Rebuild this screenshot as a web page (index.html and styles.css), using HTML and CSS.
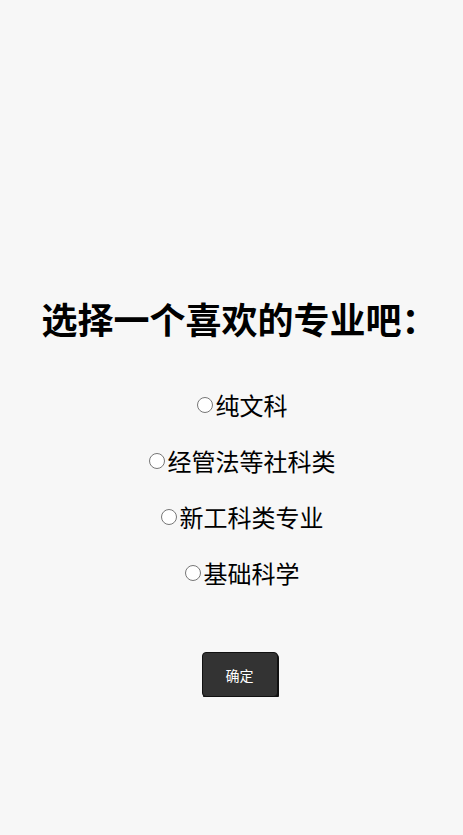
FILE: index.html
```html
<!DOCTYPE html>
<html lang="zh">
<head>
<meta charset="utf-8">
<title>选择专业</title>
<link rel="stylesheet" href="styles.css">
</head>
<body>
<main class="page">
  <h1 class="title">选择一个喜欢的专业吧：</h1>
  <form class="options">
    <label class="option"><input type="radio" name="major" class="radio">纯文科</label>
    <label class="option"><input type="radio" name="major" class="radio">经管法等社科类</label>
    <label class="option"><input type="radio" name="major" class="radio">新工科类专业</label>
    <label class="option"><input type="radio" name="major" class="radio">基础科学</label>
  </form>
  <button type="button" class="confirm">确定</button>
</main>
</body>
</html>
```

FILE: styles.css
```css
html, body {
  margin: 0;
  padding: 0;
  background: #f7f7f7;
}
body {
  font-family: "Noto Sans CJK SC", "Noto Sans", sans-serif;
  color: #000;
}
.page {
  display: flex;
  flex-direction: column;
  align-items: center;
  padding: 297px 0 0 16px;
}
.title {
  margin: 0;
  font-size: 36px;
  line-height: 42px;
  font-weight: 700;
  text-align: center;
  white-space: nowrap;
}
.options {
  display: flex;
  flex-direction: column;
  align-items: center;
  margin-top: 38px;
}
.option {
  display: flex;
  align-items: center;
  font-size: 24px;
  line-height: 56px;
  height: 56px;
}
.radio {
  width: 16px;
  height: 16px;
  margin: 0 3px 0 5px;
}
.confirm {
  margin-top: 51px;
  width: 76px;
  height: 45px;
  background: #333;
  color: #fff;
  border: 1px solid #111;
  border-radius: 4px;
  box-shadow: 1px 2px 0 #111;
  font-family: "Noto Sans CJK SC", "Noto Sans", sans-serif;
  font-size: 14px;
}
```
